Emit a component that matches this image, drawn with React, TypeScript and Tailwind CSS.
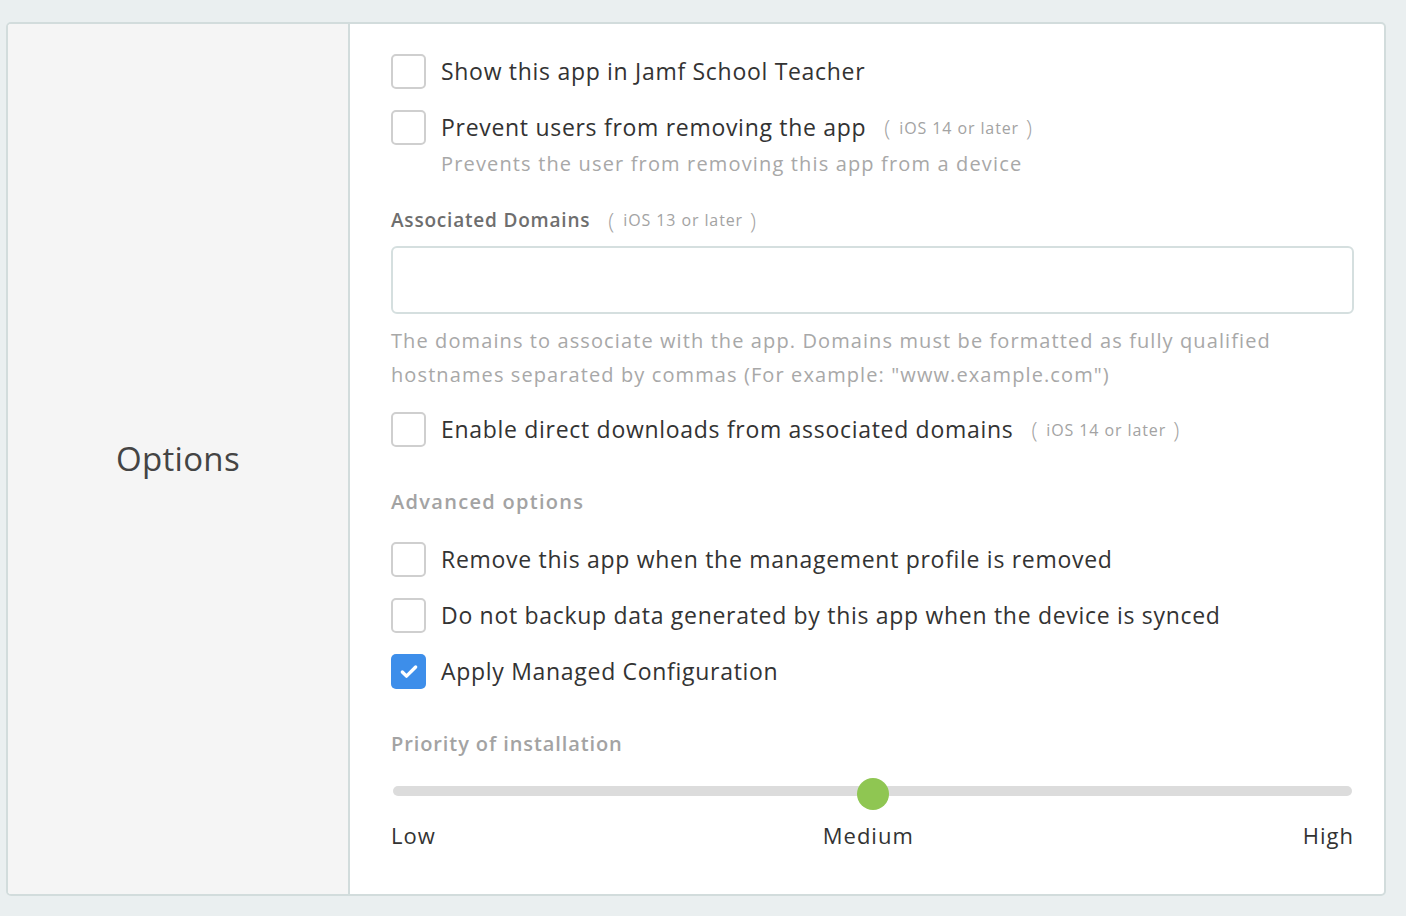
import { Check } from "lucide-react"

interface OptionRow {
    label: string;
    note?: string;
    checked?: boolean;
}

const Checkbox = ({ checked }: { checked?: boolean }) =>
    checked ? (
        <div className="w-[35px] h-[35px] shrink-0 rounded-[5px] bg-[#3d8eea] flex items-center justify-center">
            <Check className="w-[20px] h-[20px] text-white" strokeWidth={4} />
        </div>
    ) : (
        <div className="w-[35px] h-[35px] shrink-0 rounded-[5px] border-2 border-[#cfcfcf] bg-white" />
    );

const Note = ({ text }: { text: string }) => (
    <span className="ml-[18px] text-[16px] text-[#a3a3a3] flex items-center tracking-[0.9px]">
        <span className="text-[22px] font-light mr-[8px]">(</span>
        {text}
        <span className="text-[22px] font-light ml-[7px]">)</span>
    </span>
);

const Row = ({ row }: { row: OptionRow }) => (
    <div className="flex items-center h-[35px]">
        <Checkbox checked={row.checked} />
        <span className="ml-[15px] text-[23px] text-[#333333] tracking-[0.7px]">{row.label}</span>
        {row.note && <Note text={row.note} />}
    </div>
);

const advanced: OptionRow[] = [
    { label: "Remove this app when the management profile is removed" },
    { label: "Do not backup data generated by this app when the device is synced" },
    { label: "Apply Managed Configuration", checked: true },
];

export default function App() {
    return (
        <div className="min-h-[916px] bg-[#eaeff0] pt-[22px] pl-[6px] pr-[20px] pb-[20px]" style={{ fontFamily: "'Open Sans', Lato, sans-serif" }}>
            <div className="flex border-2 border-[#d2dcdc] rounded-[5px] overflow-hidden bg-white h-[874px]">
                <div className="w-[342px] bg-[#f5f5f5] border-r-2 border-[#d2dcdc] flex items-center justify-center">
                    <span className="text-[33px] text-[#444444] tracking-[0.3px]">Options</span>
                </div>
                <div className="flex-1 pl-[41px] pr-[30px] pt-[30px]">
                    <Row row={{ label: "Show this app in Jamf School Teacher" }} />
                    <div className="mt-[21px]">
                        <Row row={{ label: "Prevent users from removing the app", note: "iOS 14 or later" }} />
                    </div>
                    <div className="ml-[50px] mt-[4px] text-[20px] text-[#a8a8a8] tracking-[1.15px]">
                        Prevents the user from removing this app from a device
                    </div>

                    <div className="mt-[26px] flex items-center h-[30px]">
                        <span className="text-[19px] font-semibold text-[#6e6e6e] tracking-[0.8px]">Associated Domains</span>
                        <Note text="iOS 13 or later" />
                    </div>
                    <div className="mt-[11px] h-[68px] border-2 border-[#d5dfdf] rounded-[6px]" />
                    <p className="mt-[10px] text-[20px] leading-[34px] text-[#a8a8a8] pr-[70px] tracking-[1.1px]">
                        The domains to associate with the app. Domains must be formatted as fully qualified hostnames separated by commas (For example: "www.example.com")
                    </p>
                    <div className="mt-[20px]">
                        <Row row={{ label: "Enable direct downloads from associated domains", note: "iOS 14 or later" }} />
                    </div>

                    <div className="mt-[40px] text-[20px] font-semibold text-[#a3a3a3] tracking-[1.3px]">Advanced options</div>
                    <div className="mt-[25px] flex flex-col gap-[21px]">
                        {advanced.map((row, i) => (
                            <Row key={i} row={row} />
                        ))}
                    </div>

                    <div className="mt-[40px] text-[20px] font-semibold text-[#a3a3a3] tracking-[0.9px]">Priority of installation</div>
                    <div className="mt-[19px] relative h-[32px] flex items-center mx-[2px]">
                        <div className="w-full h-[10px] rounded-full bg-[#dcdcdc] mt-[-6px]" />
                        <div className="absolute left-[50%] top-0 -translate-x-1/2 w-[32px] h-[32px] rounded-full bg-[#8fc652]" />
                    </div>
                    <div className="mt-[9px] flex justify-between text-[22px] text-[#333333] tracking-[1px]">
                        <span>Low</span>
                        <span className="pr-[2px]">Medium</span>
                        <span>High</span>
                    </div>
                </div>
            </div>
        </div>
    );
}
